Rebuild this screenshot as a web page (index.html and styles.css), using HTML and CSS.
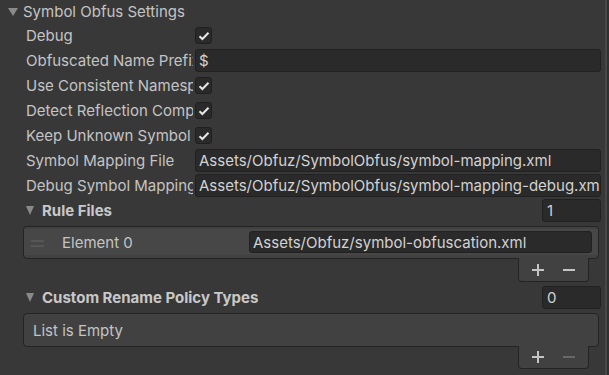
FILE: index.html
```html
<!DOCTYPE html>
<html lang="en">
<head>
    <meta charset="UTF-8">
    <title>Symbol Obfus Settings</title>
    <link rel="stylesheet" href="styles.css">
</head>
<body>
    <div class="panel">
        <div class="foldout top">
            <span class="arrow"></span>
            <span>Symbol Obfus Settings</span>
        </div>

        <div class="row">
            <label class="lbl">Debug</label>
            <span class="check"><svg viewBox="0 0 12 10" width="12" height="10"><path d="M1.5 5.2 L4.4 8 L10.5 1.8" /></svg></span>
        </div>
        <div class="row">
            <label class="lbl">Obfuscated Name Prefix</label>
            <div class="field">$</div>
        </div>
        <div class="row">
            <label class="lbl">Use Consistent Namespace</label>
            <span class="check"><svg viewBox="0 0 12 10" width="12" height="10"><path d="M1.5 5.2 L4.4 8 L10.5 1.8" /></svg></span>
        </div>
        <div class="row">
            <label class="lbl">Detect Reflection Compatibility</label>
            <span class="check"><svg viewBox="0 0 12 10" width="12" height="10"><path d="M1.5 5.2 L4.4 8 L10.5 1.8" /></svg></span>
        </div>
        <div class="row">
            <label class="lbl">Keep Unknown Symbol In Second Obfuscation</label>
            <span class="check"><svg viewBox="0 0 12 10" width="12" height="10"><path d="M1.5 5.2 L4.4 8 L10.5 1.8" /></svg></span>
        </div>
        <div class="row">
            <label class="lbl">Symbol Mapping File</label>
            <div class="field">Assets/Obfuz/SymbolObfus/symbol-mapping.xml</div>
        </div>
        <div class="row">
            <label class="lbl">Debug Symbol Mapping File</label>
            <div class="field">Assets/Obfuz/SymbolObfus/symbol-mapping-debug.xml</div>
        </div>

        <!-- Rule Files list -->
        <div class="row sub">
            <span class="arrow small"></span>
            <span class="sub-title">Rule Files</span>
            <div class="field count">1</div>
        </div>
        <div class="list">
            <div class="element">
                <span class="handle"><svg viewBox="0 0 13 7" width="13" height="7"><path d="M0 1 H13 M0 6 H13" /></svg></span>
                <span class="el-label">Element 0</span>
                <div class="field">Assets/Obfuz/symbol-obfuscation.xml</div>
            </div>
        </div>
        <div class="footer">
            <span class="btn"><svg viewBox="0 0 12 12" width="12" height="12"><path d="M0 6 H12 M6 0 V12" /></svg></span>
            <span class="btn"><svg viewBox="0 0 12 12" width="12" height="12"><path d="M0 6 H12" /></svg></span>
        </div>

        <!-- Custom Rename Policy Types list -->
        <div class="row sub second">
            <span class="arrow small"></span>
            <span class="sub-title">Custom Rename Policy Types</span>
            <div class="field count">0</div>
        </div>
        <div class="list empty">List is Empty</div>
        <div class="footer short">
            <span class="btn"><svg viewBox="0 0 12 12" width="12" height="12"><path d="M0 6 H12 M6 0 V12" /></svg></span>
            <span class="btn disabled"><svg viewBox="0 0 12 12" width="12" height="12"><path d="M0 6 H12" /></svg></span>
        </div>
    </div>
    <div class="edge"></div>
</body>
</html>
```

FILE: styles.css
```css
body {
    margin: 0;
    height: 375px;
    overflow: hidden;
    display: flex;
    background-color: #383838;
    color: #c4c4c4;
    font-family: Inter, "Noto Sans", sans-serif;
    font-size: 15px;
}

.panel {
    flex: 1;
    min-width: 0;
    overflow: hidden;
    padding-right: 4px;
}

.edge {
    flex: none;
    width: 2px;
    border-left: 2px solid #474747;
    background-color: #303030;
}

.foldout {
    display: flex;
    align-items: center;
}

.top {
    height: 23px;
    padding-left: 8px;
}

.arrow {
    width: 0;
    height: 0;
    border-left: 5px solid transparent;
    border-right: 5px solid transparent;
    border-top: 8px solid #8a8a8a;
    margin-right: 5px;
}

.arrow.small {
    border-left-width: 4.5px;
    border-right-width: 4.5px;
    border-top-width: 9px;
    margin-right: 8px;
}

.row {
    display: flex;
    align-items: center;
    height: 25px;
    padding-left: 26px;
}

.lbl {
    flex: none;
    width: 167px;
    margin-right: 2px;
    overflow: hidden;
    white-space: nowrap;
}

.check {
    width: 17px;
    height: 17px;
    box-sizing: border-box;
    background-color: #2a2a2a;
    border: 1px solid #1f1f1f;
    border-radius: 3px;
    display: flex;
    align-items: center;
    justify-content: center;
}

.check path {
    fill: none;
    stroke: #e6e6e6;
    stroke-width: 2;
}

.field {
    flex: 1;
    min-width: 0;
    height: 23px;
    box-sizing: border-box;
    background-color: #2a2a2a;
    border: 1px solid #212121;
    border-radius: 3px;
    padding: 0 3px;
    display: flex;
    align-items: center;
    overflow: hidden;
    white-space: nowrap;
    color: #d2d2d2;
}

.sub-title {
    font-weight: 700;
    color: #c8c8c8;
}

.field.count {
    flex: none;
    width: 59px;
    margin-left: auto;
    padding-left: 4px;
}

.list {
    margin: 3px 2px 0 23px;
    background-color: #414141;
    border: 1px solid #242424;
    border-radius: 4px;
    padding: 2px 0 3px;
}

.element {
    display: flex;
    align-items: center;
    height: 26px;
    background-color: #474747;
    padding: 0 6px 0 7px;
}

.handle {
    display: flex;
    margin-right: 18px;
    padding-top: 3px;
}

.handle path {
    stroke: #5c5c5c;
    stroke-width: 1.5;
}

.el-label {
    flex: none;
    width: 187px;
}

.element .field {
    height: 22px;
}

.footer {
    display: flex;
    width: 71px;
    height: 24px;
    box-sizing: border-box;
    margin: -1px 12px 0 auto;
    padding-left: 3px;
    background-color: #414141;
    border: 1px solid #242424;
    border-top: 0;
    border-radius: 0 0 4px 4px;
}

.footer.short {
    height: 23px;
}

.btn {
    width: 31px;
    display: flex;
    align-items: center;
    justify-content: center;
}

.btn path {
    stroke: #c4c4c4;
    stroke-width: 2;
}

.btn.disabled path {
    stroke: #686868;
}

.second {
    margin-top: 3px;
}

.empty {
    height: 34px;
    box-sizing: border-box;
    padding: 0 9px;
    display: flex;
    align-items: center;
}
```
